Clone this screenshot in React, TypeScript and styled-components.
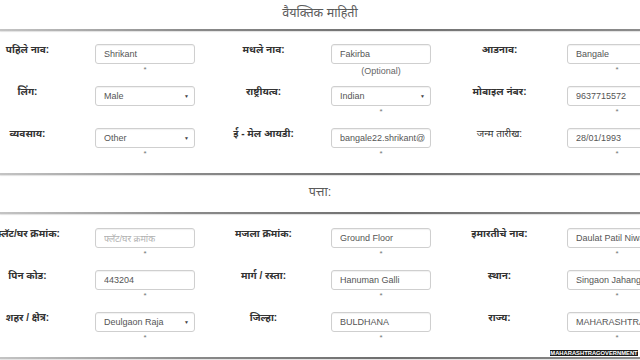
import React from 'react';
import styled, { createGlobalStyle } from 'styled-components';

type Field = {
  label: string;
  value: string;
  select?: boolean;
  placeholder?: boolean;
  note?: string;
  required?: boolean;
  light?: boolean;
};

const personal: Field[][] = [
  [
    { label: 'पहिले नाव:', value: 'Shrikant', required: true },
    { label: 'मधले नाव:', value: 'Fakirba', note: '(Optional)' },
    { label: 'आडनाव:', value: 'Bangale', required: true },
  ],
  [
    { label: 'लिंग:', value: 'Male', select: true },
    { label: 'राष्ट्रीयत्व:', value: 'Indian', select: true, required: true },
    { label: 'मोबाइल नंबर:', value: '9637715572', required: true },
  ],
  [
    { label: 'व्यवसाय:', value: 'Other', select: true, required: true },
    { label: 'ई - मेल आयडी:', value: 'bangale22.shrikant@gmail.com', required: true },
    { label: 'जन्म तारीख:', value: '28/01/1993', required: true, light: true },
  ],
];

const address: Field[][] = [
  [
    { label: 'फ्लॅट/घर क्रमांक:', value: 'फ्लॅट/घर क्रमांक', placeholder: true, required: true },
    { label: 'मजला क्रमांक:', value: 'Ground Floor', required: true },
    { label: 'इमारतीचे नाव:', value: 'Daulat Patil Niwas', required: true },
  ],
  [
    { label: 'पिन कोड:', value: '443204', required: true },
    { label: 'मार्ग / रस्ता:', value: 'Hanuman Galli', required: true },
    { label: 'स्थान:', value: 'Singaon Jahangir', required: true },
  ],
  [
    { label: 'शहर / क्षेत्र:', value: 'Deulgaon Raja', select: true, required: true },
    { label: 'जिल्हा:', value: 'BULDHANA', required: true },
    { label: 'राज्य:', value: 'MAHARASHTRA', required: true },
  ],
];

function App() {
  return (
    <Page>
      <GlobalStyle />
      <Heading $height={29}>वैयक्तिक माहिती</Heading>
      <Divider />
      <Form $top={13}>
        {personal.map((row, i) => (
          <Row key={i}>
            {row.map((f) => (
              <FieldItem key={f.label} field={f} />
            ))}
          </Row>
        ))}
      </Form>
      <Divider />
      <Heading $height={37}>पत्ता:</Heading>
      <Divider />
      <Form $top={14}>
        {address.map((row, i) => (
          <Row key={i}>
            {row.map((f) => (
              <FieldItem key={f.label} field={f} />
            ))}
          </Row>
        ))}
      </Form>
      <Divider />
      <Watermark>MAHARASHTRAGOVERNMENT</Watermark>
    </Page>
  );
}

function FieldItem({ field }: { field: Field }) {
  return (
    <Group>
      <Label $light={field.light}>{field.label}</Label>
      <ControlCol>
        <Control>
          <Value $placeholder={field.placeholder}>{field.value}</Value>
          {field.select && <Caret>▼</Caret>}
        </Control>
        {field.note && <Note>{field.note}</Note>}
        {field.required && <Star>*</Star>}
      </ControlCol>
    </Group>
  );
}

export default App;

const GlobalStyle = createGlobalStyle`
  html, body {
    margin: 0;
    padding: 0;
    background: #ffffff;
    overflow: hidden;
  }
  body {
    font-family: "Liberation Sans", Arial, "Noto Sans", sans-serif;
  }
`;

const Page = styled.div`
  position: relative;
  width: 640px;
  height: 360px;
  overflow: hidden;
  background: #fff;
`;

const Heading = styled.div<{ $height: number }>`
  height: ${({ $height }) => $height}px;
  display: flex;
  align-items: center;
  justify-content: center;
  font-size: 12.5px;
  color: #5a5a5a;
  padding-bottom: 4px;
  box-sizing: border-box;
`;

const Divider = styled.div`
  height: 2px;
  background: linear-gradient(to right, #c4c4c4, #8a8a8a 30%, #6f6f6f 60%, #8c8c8c);
  box-shadow: 0 1px 1px rgba(0, 0, 0, 0.12);
`;

const Form = styled.div<{ $top: number }>`
  padding-top: ${({ $top }) => $top}px;
  padding-bottom: 3px;
  margin-left: -40px;
`;

const Row = styled.div`
  display: grid;
  grid-template-columns: repeat(3, 236px);
  height: 42px;
`;

const Group = styled.div`
  display: flex;
  align-items: flex-start;
`;

const Label = styled.div<{ $light?: boolean }>`
  width: 135px;
  flex-shrink: 0;
  text-align: center;
  white-space: nowrap;
  font-size: 10px;
  line-height: 14px;
  margin-top: -1px;
  font-weight: ${({ $light }) => ($light ? 400 : 700)};
  color: #333;
`;

const ControlCol = styled.div`
  width: 100px;
  display: flex;
  flex-direction: column;
  align-items: center;
`;

const Control = styled.div`
  width: 100px;
  height: 20px;
  box-sizing: border-box;
  border: 1px solid #cfcfcf;
  border-radius: 3px;
  box-shadow: inset 0 1px 1px rgba(0, 0, 0, 0.06);
  display: flex;
  align-items: center;
  padding: 0 5px 0 8px;
  overflow: hidden;
  background: #fff;
`;

const Value = styled.span<{ $placeholder?: boolean }>`
  flex: 1;
  white-space: nowrap;
  overflow: hidden;
  font-size: 9px;
  color: ${({ $placeholder }) => ($placeholder ? '#b0b0b0' : '#555')};
`;

const Caret = styled.span`
  font-size: 5px;
  color: #444;
  margin-left: 4px;
`;

const Note = styled.div`
  font-size: 9px;
  line-height: 12px;
  color: #666;
  margin-top: 1px;
`;

const Star = styled.div`
  font-size: 8px;
  line-height: 8px;
  color: #777;
  margin-top: 2px;
`;

const Watermark = styled.div`
  position: absolute;
  right: 2px;
  top: 350px;
  width: 88px;
  box-sizing: border-box;
  text-align: center;
  overflow: hidden;
  background: #1a1a1a;
  color: #fff;
  font-size: 5.8px;
  line-height: 6px;
  font-weight: 700;
  letter-spacing: 0;
  white-space: nowrap;
`;
